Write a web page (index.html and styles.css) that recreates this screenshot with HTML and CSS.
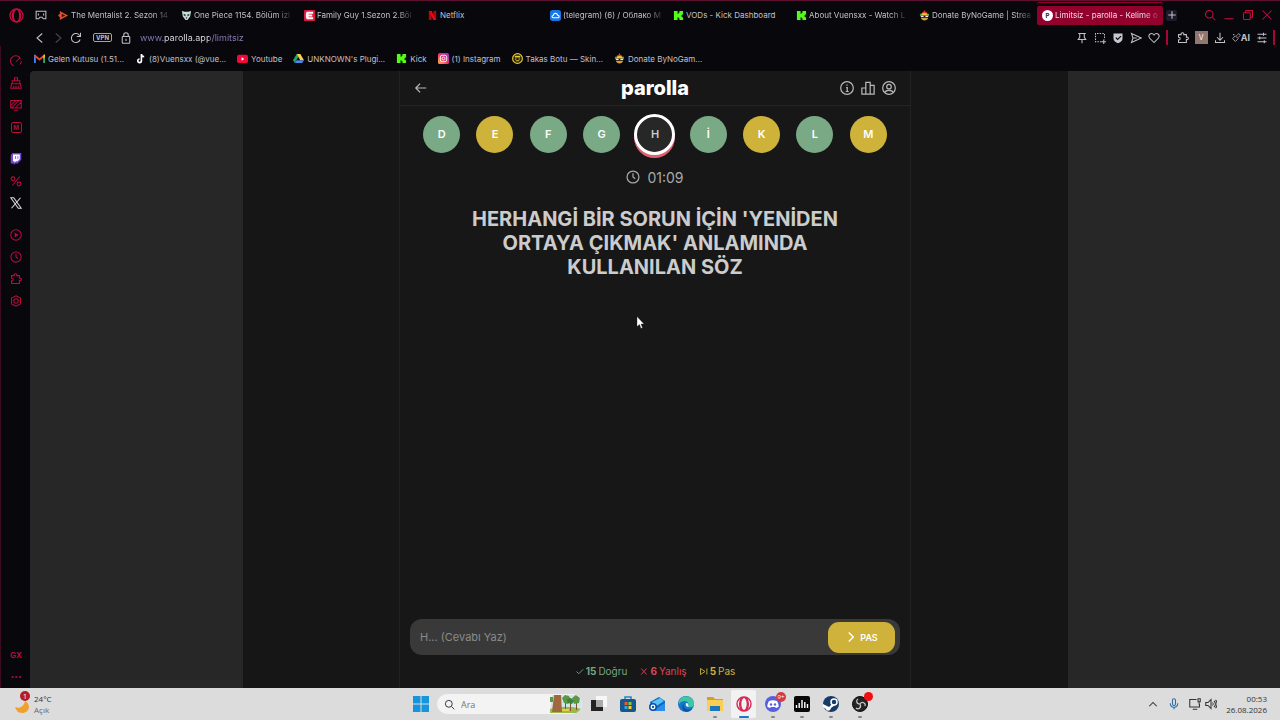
FILE: index.html
```html
<!DOCTYPE html>
<html lang="tr">

<head>
  <meta charset="UTF-8" />
  <title>Limitsiz - parolla - Kelime oyunu</title>
  <meta name="viewport" content="width=device-width, initial-scale=1.0" />
  <link rel="stylesheet" href="styles.css">
</head>

<body>
  <!-- shared icons -->
  <svg class="sprite" aria-hidden="true">
    <symbol id="opera" viewBox="0 0 16 16"><circle cx="8" cy="8" r="7" /><ellipse cx="8" cy="8" rx="3.4" ry="6.6" /><path d="M5.5 2.2C3 5 3 11 5.5 13.8M10.5 2.2c2.5 2.800 2.500 8.800 0 11.600" /></symbol>
    <symbol id="kick" viewBox="0 0 12 12"><path fill="#53fc18" d="M1 1h4v3h1V3h1V1h4v4h-1v1H9v1h1v1h1v3H7V9H6V8H5v3H1z" /></symbol>
    <symbol id="bynogame" viewBox="0 0 12 12"><path fill="#e23b2e" d="M6 0l1 2 2 1-1 2H4L3 3l2-1z" /><path fill="#f1c232" d="M1 7c0-5 10-5 10 0z" /><path fill="#151515" d="M1 6h10v2H1z" /><path fill="#eee" d="M2 6.300h3v1.400H2zM7 6.300h3v1.400H7z" /><path fill="#d3a03a" d="M2 8.500h8c-1 4-7 4-8 0z" /><path fill="#4ba34f" d="M1 4h2v2H1zM9 4h2v2H9z" /></symbol>
    <symbol id="puzzle" viewBox="0 0 16 16"><path d="M2 3.500h3.500c-1-3.500 4.500-3.500 3.500 0h3.500V7c3.500-1 3.500 4 0 3v4H2v-3.500c3 .5 3-4 0-3.500z" /></symbol>
    <symbol id="clock" viewBox="0 0 16 16"><circle cx="8" cy="8" r="6.800" /><path d="M8 3.800V8l2.500 2" /></symbol>
  </svg>

  <header class="chrome">
    <div class="tab-row">
      <button class="opera-menu" aria-label="Opera"><svg class="logo line"><use href="#opera" /></svg></button>
      <button class="workspace" aria-label="Çalışma alanı"><svg class="icon line" viewBox="0 0 16 16"><path d="M1.500 3h13v10H11L9.500 11h-3L5 13H1.500zM4.500 6v2.500M11.500 6v2.500" /></svg></button>
      <nav class="tabs">
        <a class="tab" href="#"><svg class="fav" viewBox="0 0 12 12"><path fill="#e2502a" d="M2 1l9 5-9 5V8L0 6l2-2z" /><path fill="#3b1510" d="M4 4l4 2-4 2z" /></svg><span class="fade">The Mentalist 2. Sezon 14</span></a>
        <a class="tab" href="#"><svg class="fav" viewBox="0 0 12 12"><path fill="#c9dcd6" d="M1 1l3 1h4l3-1-1 6-3 4H5L2 7z" /><path fill="#23443e" d="M3 4l2 1v2L3 6zM9 4L7 5v2l2-1zM5 8h2l-1 2z" /></svg><span class="fade">One Piece 1154. Bölüm izl</span></a>
        <a class="tab" href="#"><svg class="fav" viewBox="0 0 12 12"><rect width="12" height="12" rx="1" fill="#dc1740" /><path fill="#fff" d="M3 2h7v2H5v1h4v2H5v1h5v2H3L2 8V4z" /></svg><span class="fade">Family Guy 1.Sezon 2.Böl</span></a>
        <a class="tab" href="#"><svg class="fav" viewBox="0 0 12 12"><path fill="#b1060f" d="M2 1h3v10H2zM7 1h3v10H7z" /><path fill="#e50914" d="M2 1h3l5 10H7z" /></svg><span>Netflix</span></a>
        <a class="tab" href="#"><svg class="fav" viewBox="0 0 12 12"><rect width="12" height="12" rx="3" fill="#1877e8" /><path fill="none" stroke="#fff" stroke-width="1.200" d="M3.500 8.500c-2-.3-1.500-2.500 0-2.500.3-3 4.200-3 4.800-.3 2.200 0 2.200 2.800.2 2.800z" /></svg><span class="fade">(telegram) (6) / Облако M</span></a>
        <a class="tab" href="#"><svg class="fav"><use href="#kick" /></svg><span>VODs - Kick Dashboard</span></a>
        <a class="tab" href="#"><svg class="fav"><use href="#kick" /></svg><span class="fade">About Vuensxx - Watch L</span></a>
        <a class="tab" href="#"><svg class="fav"><use href="#bynogame" /></svg><span class="fade">Donate ByNoGame | Strea</span></a>
        <a class="tab active" href="#"><b class="fav letter">P</b><span class="fade">Limitsiz - parolla - Kelime o</span></a>
      </nav>
      <button class="new-tab" aria-label="Yeni sekme"><svg class="icon line" viewBox="0 0 16 16"><path d="M8 3v10M3 8h10" /></svg></button>
      <div class="window-buttons">
        <button aria-label="Ara"><svg class="icon line" viewBox="0 0 16 16"><circle cx="7" cy="7" r="5" /><path d="M11 11l4 4" /></svg></button>
        <button aria-label="Simge durumuna küçült"><svg class="icon line" viewBox="0 0 16 16"><path d="M2 13h12" /></svg></button>
        <button aria-label="Geri yükle"><svg class="icon line" viewBox="0 0 16 16"><rect x="2" y="5" width="9" height="9" rx="1" /><path d="M5 5V2h9v9h-3" /></svg></button>
        <button aria-label="Kapat"><svg class="icon line" viewBox="0 0 16 16"><path d="M2 2l12 12M14 2L2 14" /></svg></button>
      </div>
    </div>

    <div class="toolbar">
      <div class="nav-buttons">
        <button aria-label="Geri"><svg class="icon line" viewBox="0 0 16 16"><path d="M11 2L4 8l7 6" /></svg></button>
        <button class="off" aria-label="İleri" disabled><svg class="icon line" viewBox="0 0 16 16"><path d="M5 2l7 6-7 6" /></svg></button>
        <button aria-label="Yenile"><svg class="icon line" viewBox="0 0 16 16"><path d="M13.500 10A6 6 0 1 1 13 5M14 1v5H9" /></svg></button>
      </div>
      <button class="vpn">VPN</button>
      <button class="lock" aria-label="Site bilgisi"><svg class="icon line" viewBox="0 0 16 16"><rect x="3" y="6" width="10" height="9" rx="1" /><path d="M5 6V4c0-4 6-4 6 0v2M8 9v3" /></svg></button>
      <input class="address" type="text" value="www.parolla.app/limitsiz" aria-label="Adres" />
      <div class="tools">
        <button aria-label="Sabitle"><svg class="icon line" viewBox="0 0 16 16"><path d="M3 2h10M5 2v5l-2 3h10l-2-3V2M8 10v5" /></svg></button>
        <button aria-label="Ekran görüntüsü"><svg class="icon line" viewBox="0 0 16 16"><path stroke-dasharray="2 1.500" d="M10 13H2V2h12v8" /><path d="M13 10v6M10 13h6" /></svg></button>
        <button aria-label="Reklam engelleyici"><svg class="icon" viewBox="0 0 16 16"><path fill="#c9c6d2" d="M2 2h12v7c0 3-3 5-6 6-3-1-6-3-6-6z" /><path fill="none" stroke="#0a080d" stroke-width="1.600" d="M5 7.500L7.500 10 12 5.500" /></svg></button>
        <button aria-label="Akışım"><svg class="icon line" viewBox="0 0 16 16"><path d="M2 2l13 6-13 6 2-6zM4 8h5" /></svg></button>
        <button aria-label="Favori"><svg class="icon line" viewBox="0 0 16 16"><path d="M8 14L2 8C-1 3 5 0 8 4c3-4 9-1 6 4z" /></svg></button>
      </div>
      <div class="tools extensions">
        <button aria-label="Uzantılar"><svg class="icon line"><use href="#puzzle" /></svg></button>
        <button class="profile">V</button>
        <button aria-label="İndirilenler"><svg class="icon line" viewBox="0 0 16 16"><path d="M8 1v9M4 7l4 4 4-4M2 11v3h12v-3" /></svg></button>
        <button class="ai"><svg class="line" viewBox="0 0 16 16"><path d="M1 10l5-5 5 5-5 5zM8 5l4-4 3 3-4 4M2 3h2M3 2v2" /></svg>AI</button>
        <button aria-label="Ayarlar"><svg class="icon line" viewBox="0 0 16 16"><path d="M2 3h12M2 8h12M2 13h12M10 1v4M5 6v4M11 11v4" /></svg></button>
      </div>
    </div>
  </header>

  <div class="workarea">
    <aside class="sidebar">
      <button aria-label="Speed dial"><svg class="icon line" viewBox="0 0 16 16"><path d="M5 14.500A7 7 0 1 1 14 5M8 9l5-5M15 8c0 2-.5 3.500-1.500 4.500" /></svg></button>
      <button aria-label="GX Temizleyici"><svg class="icon line" viewBox="0 0 16 16"><path d="M6 5V1h4v4M3 9V5h10v4M2 9h12l1 6H1zM5 15v-3M8 15v-3M11 15v-3" /></svg></button>
      <button aria-label="Duvar kağıdı"><svg class="icon line" viewBox="0 0 16 16"><path d="M1 2h14v10H1zM5 15h6M2 8l6-6M2 12L12 2M7 12l8-8" /></svg></button>
      <button class="mod" aria-label="Mod"><b>M</b></button>
      <button class="group" aria-label="Twitch"><svg class="icon" viewBox="0 0 16 16"><path fill="#7446d8" d="M3 0h12v9l-5 5H7l-2 2v-2H1V3z" /><path fill="#fff" d="M4 2h9v6l-3 3H8l-2 2v-2H4z" /><path fill="#7446d8" d="M7 4h1v4H7zM10 4h1v4h-1z" /></svg></button>
      <button aria-label="Fırsatlar"><svg class="icon line" viewBox="0 0 16 16"><circle cx="4" cy="5" r="2.500" /><circle cx="12" cy="12" r="2.500" /><path d="M13 2L3 14" /></svg></button>
      <button class="x-app" aria-label="X"><svg class="icon line" viewBox="0 0 16 16"><path d="M1 1h4l10 14h-4zM14 1L2 15" /></svg></button>
      <button class="group" aria-label="Oynatıcı"><svg class="icon line" viewBox="0 0 16 16"><circle cx="8" cy="8" r="7" /><path fill="currentColor" d="M7 6l3 2-3 2z" /></svg></button>
      <button aria-label="Geçmiş"><svg class="icon line"><use href="#clock" /></svg></button>
      <button aria-label="Uzantılar"><svg class="icon line"><use href="#puzzle" /></svg></button>
      <button aria-label="Ayarlar"><svg class="icon line" viewBox="0 0 16 16"><path d="M8 1l6 3v8l-6 3-6-3V4z" /><circle cx="8" cy="8" r="3" /></svg></button>
      <button class="bottom">GX</button>
      <button aria-label="Diğer"><svg class="icon" viewBox="0 0 16 16"><path fill="currentColor" d="M2 7h3v2H2zM7 7h3v2H7zM12 7h3v2h-3z" /></svg></button>
    </aside>

    <div class="content">
      <nav class="bookmarks">
        <a href="#"><svg class="fav" viewBox="0 0 12 12"><path fill="#4285f4" d="M0 2h2v9H0z" /><path fill="#34a853" d="M10 2h2v9h-2z" /><path fill="none" stroke="#ea4335" stroke-width="2.200" d="M1 3l5 4 5-4" /><path fill="#fbbc04" d="M10 3l2-2v4l-2 1z" /></svg>Gelen Kutusu (1.51...</a>
        <a href="#"><svg class="fav" viewBox="0 0 12 12"><path fill="none" stroke="#fff" stroke-width="1.800" d="M7 1v7.500A2 2 0 1 1 5 6.500M7 1.500c.2 2 1.500 2.500 3 2.500" /></svg>(8)Vuensxx (@vue...</a>
        <a href="#"><svg class="fav" viewBox="0 0 12 12"><rect y="2" width="12" height="9" rx="2" fill="#f1093c" /><path fill="#fff" d="M5 4.500l3 2-3 2z" /></svg>Youtube</a>
        <a href="#"><svg class="fav" viewBox="0 0 12 12"><path fill="#1fa463" d="M4 1L0 8l2 3 4-7z" /><path fill="#ffcf48" d="M4 1h4l4 7H8z" /><path fill="#4688f4" d="M2 11l2-3h8l-2 3z" /></svg>UNKNOWN's Plugi...</a>
        <a href="#"><svg class="fav"><use href="#kick" /></svg>Kick</a>
        <a href="#"><svg class="fav" viewBox="0 0 12 12"><defs><linearGradient id="insta" x1="0" y1="1" x2="1" y2="0"><stop offset="0" stop-color="#ffb33c" /><stop offset=".5" stop-color="#ef2f70" /><stop offset="1" stop-color="#8b35e0" /></linearGradient></defs><rect width="12" height="12" rx="2" fill="url(#insta)" /><g fill="none" stroke="#fff"><rect x="2.500" y="2.500" width="7" height="7" rx="2" /><circle cx="6" cy="6" r="1.600" /></g></svg>(1) Instagram</a>
        <a href="#"><svg class="fav" viewBox="0 0 12 12"><circle cx="6" cy="6" r="5.300" fill="#17150c" stroke="#eacb35" stroke-width="1.300" /><path fill="#eacb35" d="M3 3h6v2H3zM3 6h2v1H3zM7 6h2v1H7zM4 8h4v1H4z" /></svg>Takas Botu — Skin...</a>
        <a href="#"><svg class="fav"><use href="#bynogame" /></svg>Donate ByNoGam...</a>
      </nav>

      <div class="page">
        <main class="stage">
          <section class="game">
            <div class="game-header">
              <button aria-label="Geri"><svg class="game-icon line" viewBox="0 0 16 16"><path d="M14 8H2M7 3L2 8l5 5" /></svg></button>
              <h1>parolla</h1>
              <div class="game-actions">
                <button aria-label="Bilgi"><svg class="game-icon line" viewBox="0 0 16 16"><circle cx="8" cy="8" r="7.200" /><path d="M7 7.500h1.300V12M6.500 12h3.500M8 4v1.500" /></svg></button>
                <button aria-label="İstatistik"><svg class="game-icon line" viewBox="0 0 16 16"><path d="M1 15V8h4.500v7zM5.500 15V1.500h5V15zM10.500 15V5H15v10z" /></svg></button>
                <button aria-label="Profil"><svg class="game-icon line" viewBox="0 0 16 16"><circle cx="8" cy="8" r="7.200" /><circle cx="8" cy="6.500" r="2.600" /><path d="M3.500 13c1-3 8-3 9 0" /></svg></button>
              </div>
            </div>

            <ol class="letters">
              <li class="correct">D</li>
              <li class="passed">E</li>
              <li class="correct">F</li>
              <li class="correct">G</li>
              <li class="current">H</li>
              <li class="correct">İ</li>
              <li class="passed">K</li>
              <li class="correct">L</li>
              <li class="passed">M</li>
            </ol>

            <div class="timer"><svg class="game-icon line"><use href="#clock" /></svg><time>01:09</time></div>

            <h2 class="question">HERHANGİ BİR SORUN İÇİN 'YENİDEN ORTAYA ÇIKMAK' ANLAMINDA KULLANILAN SÖZ</h2>

            <form class="answer">
              <input type="text" placeholder="H... (Cevabı Yaz)" aria-label="Cevap" />
              <button type="button" class="pass"><svg class="icon line" viewBox="0 0 16 16"><path d="M5 2l6 6-6 6" /></svg>PAS</button>
            </form>

            <div class="score">
              <span class="score-correct"><svg class="score-icon line" viewBox="0 0 12 12"><path d="M2 6l3 3 6-6" /></svg><b>15</b> Doğru</span>
              <span class="score-wrong"><svg class="score-icon line" viewBox="0 0 12 12"><path d="M3 2l7 8M10 2l-7 8" /></svg><b>6</b> Yanlış</span>
              <span class="score-pass"><svg class="score-icon line" viewBox="0 0 12 12"><path d="M2 2l6 4-6 4zM10.500 2v8" /></svg><b>5</b> Pas</span>
            </div>
          </section>
        </main>
      </div>
    </div>
  </div>

  <footer class="taskbar">
    <button class="weather">
      <span class="weather-icon">
        <svg viewBox="0 0 16 16"><path fill="#f0a12d" d="M1 9c4 2 9 0 10-6 7 4 4 12-3 12-4 0-6-3-7-6z" /></svg>
        <span class="badge">1</span>
      </span>
      <span class="weather-text">24°C<small>Açık</small></span>
    </button>

    <div class="apps">
      <button class="app" aria-label="Başlat"><svg viewBox="0 0 16 16"><path fill="#1595dc" d="M0 0h7.500v7.500H0zM8.500 0H16v7.500H8.500zM0 8.500h7.500V16H0zM8.500 8.500H16V16H8.500z" /></svg></button>
      <label class="search">
        <svg class="line" viewBox="0 0 16 16"><circle cx="7" cy="7" r="5" /><path d="M11 11l4 4" /></svg>
        <input type="text" placeholder="Ara" />
        <svg class="forest" viewBox="0 0 32 18"><path fill="#cfe6e8" d="M2 0h26c5 3 5 15 0 18H0z" /><path fill="#9bb84a" d="M0 14c8-3 24-3 31 0l-3 4H0z" /><path fill="#a3673f" d="M4 0h7l1 17H2z" /><path fill="#7d5434" d="M15 5h1v10h-1zM20 6h1v10h-1zM26 6h1v9h-1z" /><path fill="#5b9846" d="M12 3l3-3 4 1 2 4-3 4-4-1zM22 3l4-3 4 3-1 5-5 1zM0 2h3v5H0z" /><path fill="#417f3c" d="M17 4l4-1 3 3-2 3-4-1z" /><path fill="#efc84a" d="M12 14h7v2h-7z" /></svg>
      </label>
      <button class="app" aria-label="Görev görünümü"><svg viewBox="0 0 16 16"><path fill="#f7f7f7" d="M5 0h11v11H5z" /><path fill="#222" d="M0 4h12v11H0z" /><path fill="#aaa" d="M5 4h7v7H5z" /></svg></button>
      <button class="app" aria-label="Mağaza"><svg viewBox="0 0 16 16"><path fill="none" stroke="#2386c4" stroke-width="1.500" d="M5 4V1h6v3" /><rect y="3" width="16" height="13" rx="2" fill="#17578d" /><path fill="#f05a28" d="M4.500 6h3v3h-3z" /><path fill="#8cc63e" d="M8.500 6h3v3h-3z" /><path fill="#29abe2" d="M4.500 10h3v3h-3z" /><path fill="#fdc72f" d="M8.500 10h3v3h-3z" /></svg></button>
      <button class="app" aria-label="Outlook"><svg viewBox="0 0 16 16"><path fill="#1265c5" d="M1 6l9-5 6 4v10H3z" /><path fill="#58c3f5" d="M3 6l8-4 4 3-9 6z" /><path fill="#2b8de8" d="M5 14l11-7v8H5z" /><circle cx="4" cy="11" r="4" fill="#0c4fa8" /><circle cx="4" cy="11" r="1.800" fill="none" stroke="#fff" stroke-width="1.300" /></svg></button>
      <button class="app" aria-label="Edge"><svg viewBox="0 0 16 16"><circle cx="8" cy="8" r="8" fill="#1677c9" /><path fill="#3ec6a5" d="M1 5c4-8 15-5 15 3 0 4-6 4-6 2 2-5-5-7-9-2z" /><path fill="#0c4f9c" d="M6 7c-2 5 3 8 8 6-5 6-13 1-8-6z" /><path fill="#e7f7fb" d="M8 7c4 0 1 3 3 4-2 0-4-1-3-4z" /></svg></button>
      <button class="app running" aria-label="Dosya Gezgini"><svg viewBox="0 0 16 16"><path fill="#d89d22" d="M0 1h6l2 2h8v5H0z" /><path fill="#f8cf54" d="M0 4h16v11H0z" /><path fill="#1d75bd" d="M3 10h10v5H3z" /></svg></button>
      <button class="app running selected" aria-label="Opera GX"><svg class="line"><use href="#opera" /></svg></button>
      <button class="app running" aria-label="Discord"><svg viewBox="0 0 16 16"><circle cx="8" cy="8" r="8" fill="#5560dc" /><path fill="#fff" d="M4 5c3-1 5-1 8 0 1 2 2 4 1.500 6L11 12l-1-1H6l-1 1-2.500-1C2 9 3 7 4 5z" /><circle cx="6" cy="8.500" r="1.200" fill="#5560dc" /><circle cx="10" cy="8.500" r="1.200" fill="#5560dc" /></svg><span class="badge">9+</span></button>
      <button class="app running" aria-label="Ses"><svg viewBox="0 0 16 16"><rect width="16" height="16" rx="2" fill="#080808" /><path stroke="#fff" stroke-width="1.400" d="M2.500 9v3M5.200 7v5M8 4v8M10.800 6v6M13.500 8v4" /></svg></button>
      <button class="app running" aria-label="Steam"><svg viewBox="0 0 16 16"><circle cx="8" cy="8" r="8" fill="#153b66" /><path fill="#fff" d="M0 8l6 3 3-3 3 1-4 3c-1 4-5 3-5 1L0 11z" /><circle cx="11" cy="6" r="3" fill="#153b66" stroke="#fff" stroke-width="1.500" /></svg></button>
      <button class="app running" aria-label="OBS"><svg viewBox="0 0 16 16"><circle cx="8" cy="8" r="7.500" fill="#242424" stroke="#111" /><path fill="none" stroke="#ccc" stroke-width="1.200" d="M8 8C4 8 4 4 6 3M8 8c2-3 6-1 5 2M8 8c2 4-2 6-4 4" /></svg><span class="badge dot"></span></button>
    </div>

    <div class="tray">
      <button aria-label="Gizli simgeler"><svg class="line" viewBox="0 0 16 16"><path d="M3 11l5-5 5 5" /></svg></button>
      <button class="mic" aria-label="Mikrofon"><svg class="line" viewBox="0 0 16 16"><rect x="6" y="1" width="4" height="9" rx="2" /><path d="M3 7c0 7 10 7 10 0M8 12v3" /></svg></button>
      <button class="system" aria-label="Ağ ve ses">
        <svg class="line" viewBox="0 0 16 16"><path d="M10 2H1v10h13V8M5 15h6M12 1h3v4h-3zM13.500 5v4" /></svg>
        <svg class="line" viewBox="0 0 16 16"><path d="M1 6h3l4-4v12l-4-4H1zM10 6c1 1 1 3 0 4M12 4c2.500 2 2.500 6 0 8M14 2.500c3 3 3 8 0 11" /></svg>
      </button>
      <button class="date">00:53<br>26.08.2026</button>
    </div>
  </footer>

  <svg class="cursor" viewBox="0 0 8 13" aria-hidden="true"><path fill="#fff" stroke="#111" stroke-width=".3" d="M.5.5v10L3 8.500l1.500 4 1.500-.7L4.500 8h3z" /></svg>
</body>

</html>
```

FILE: styles.css
```css
* {
  box-sizing: border-box;
}

body {
  margin: 0;
  height: 100vh;
  display: flex;
  flex-direction: column;
  overflow: hidden;
  background: #08070b;
  color: #c3c0ca;
  font-family: Inter, sans-serif;
  font-size: 8px;
}

button,
input {
  margin: 0;
  padding: 0;
  border: none;
  outline: none;
  background: none;
  color: inherit;
  font: inherit;
}

button {
  display: flex;
  align-items: center;
  justify-content: center;
  cursor: pointer;
}

a {
  color: inherit;
  text-decoration: none;
}

svg {
  display: block;
  flex: none;
}

.sprite {
  position: absolute;
  width: 0;
  height: 0;
}

.line {
  fill: none;
  stroke: currentColor;
  stroke-width: 1.4;
}

.icon {
  width: 12px;
  height: 12px;
}

.fav {
  width: 11px;
  height: 11px;
}

/* Tabs */
.chrome {
  border-top: 1px solid #5c1230;
}

.tab-row {
  display: flex;
  align-items: center;
  height: 28px;
}

.opera-menu {
  width: 32px;
  color: #c5103f;
}

.logo {
  width: 15px;
  height: 15px;
}

.workspace {
  width: 18px;
}

.tabs {
  flex: 1;
  display: flex;
  min-width: 0;
  margin-left: 3px;
}

.tab {
  flex: 1;
  display: flex;
  align-items: center;
  gap: 2px;
  min-width: 0;
  height: 19px;
  padding: 0 5px;
  white-space: nowrap;
}

.fade {
  mask-image: linear-gradient(to right, #000 85%, rgba(0, 0, 0, 0.2));
}

.tab.active {
  flex: 0 0 126px;
  background: #92002e;
  color: #eadde3;
  border-radius: 2px;
  box-shadow: 0 -3px #08070b, 0 -4px #92002e;
}

.letter {
  flex: none;
  border-radius: 50%;
  background: #fff;
  color: #222;
  font-size: 6px;
  line-height: 11px;
  text-align: center;
}

.new-tab {
  width: 11px;
  height: 11px;
  margin-left: 3px;
  border-radius: 2px;
  background: #1d1a29;
}

.window-buttons {
  display: flex;
  gap: 7px;
  padding: 0 7px 0 27px;
  color: #c5103f;
}

/* Address bar */
.toolbar {
  display: flex;
  align-items: center;
  height: 17px;
  padding: 0 5px 0 34px;
}

.nav-buttons {
  display: flex;
  gap: 6px;
}

.off {
  color: #4a4750;
}

.vpn {
  width: 19px;
  height: 9px;
  margin-left: 11px;
  border: 1px solid #a4a1aa;
  border-radius: 2px;
  font-size: 6px;
  font-weight: 700;
}

.lock {
  margin-left: 8px;
}

/* host is brighter than the rest of the address */
.address {
  flex: 1;
  min-width: 0;
  margin-left: 8px;
  font-size: 9px;
  color: transparent;
  background: linear-gradient(to right, #8a7cb5 23px, #e4e1ea 23px, #e4e1ea 69px, #8a7cb5 69px);
  background-clip: text;
}

.tools {
  display: flex;
  align-items: center;
  gap: 6px;
  padding-right: 6px;
}

.extensions {
  height: 15px;
  padding: 0 5px 0 9px;
  border-left: 2px solid #a90638;
  border-right: 2px solid #a90638;
}

.profile {
  width: 13px;
  height: 13px;
  background: #93766e;
  color: #fff;
  font-size: 7px;
}

.ai {
  font-size: 9px;
  font-weight: 700;
}

.ai svg {
  width: 9px;
  height: 9px;
}

/* Sidebar */
.workarea {
  flex: 1;
  display: flex;
  min-height: 0;
}

.sidebar {
  width: 30px;
  display: flex;
  flex-direction: column;
  padding: 4px 0 0 1px;
  border-left: 1px solid #3b0c20;
  color: #b90d3d;
}

.sidebar button {
  height: 22px;
}

.sidebar .group {
  margin-top: 10px;
}

.sidebar .bottom {
  margin-top: auto;
  font-weight: 700;
}

.sidebar .x-app {
  color: #ddd;
}

.mod b {
  width: 11px;
  height: 11px;
  border: 1px solid;
  border-radius: 2px;
  font-size: 6px;
  line-height: 9px;
}

.content {
  flex: 1;
  display: flex;
  flex-direction: column;
  min-width: 0;
}

.bookmarks {
  display: flex;
  align-items: center;
  gap: 11px;
  height: 25px;
  padding-left: 4px;
  white-space: nowrap;
}

.bookmarks a {
  display: flex;
  align-items: center;
  gap: 3px;
}

/* Web page */
.page {
  flex: 1;
  display: flex;
  justify-content: center;
  min-height: 0;
  background: #272727;
  border-top-left-radius: 4px;
}

.stage {
  width: 66%;
  display: flex;
  justify-content: center;
  background: #161616;
}

.game {
  width: 100%;
  max-width: 512px;
  display: flex;
  flex-direction: column;
  background: #171717;
  border-left: 1px solid #222;
  border-right: 1px solid #222;
  color: #ccc;
}

.game-icon {
  width: 14px;
  height: 14px;
}

.game-header {
  display: grid;
  grid-template-columns: 1fr auto 1fr;
  align-items: center;
  height: 35px;
  padding: 0 14px;
  border-bottom: 1px solid #242424;
  color: #b8b8b8;
}

.game-header button {
  justify-self: start;
}

.game-header h1 {
  margin: 0;
  color: #fff;
  font-size: 20px;
  font-weight: 800;
  line-height: 24px;
}

.game-actions {
  display: flex;
  justify-content: flex-end;
  gap: 7px;
}

.letters {
  display: grid;
  grid-template-columns: repeat(9, 1fr);
  place-items: center;
  height: 42px;
  margin: 7px 15px 0;
  padding: 0;
  list-style: none;
}

.letters li {
  display: flex;
  align-items: center;
  justify-content: center;
  width: 37px;
  height: 37px;
  border-radius: 50%;
  color: #fff;
  font-size: 11px;
  font-weight: 600;
}

.letters .correct {
  background: #7aa985;
}

.letters .passed {
  background: #ceb23a;
}

.letters .current {
  width: 41px;
  height: 41px;
  background: #272727;
  border: 3px solid #fff;
  box-shadow: 0 3px #e0606f;
  color: #ccc;
}

.timer {
  display: flex;
  align-items: center;
  justify-content: center;
  gap: 7px;
  height: 20px;
  margin-top: 12px;
  color: #aaa;
  font-size: 14px;
}

.question {
  flex: 1;
  margin: 20px 60px 0;
  text-align: center;
  font-size: 20px;
  font-weight: 700;
  line-height: 24px;
}

.answer {
  display: flex;
  align-items: center;
  height: 36px;
  margin: 0 10px;
  padding: 0 5px 0 10px;
  border-radius: 12px;
  background: #393939;
}

.answer input {
  flex: 1;
  min-width: 0;
  font-size: 11px;
}

.answer input::placeholder {
  color: #8a8a8a;
  opacity: 1;
}

.pass {
  gap: 3px;
  width: 67px;
  height: 31px;
  border-radius: 11px;
  background: #ceb23a;
  color: #fff;
  font-size: 9px;
  font-weight: 600;
}

.pass .icon {
  stroke-width: 2;
}

.score {
  display: flex;
  justify-content: center;
  gap: 12px;
  height: 33px;
  line-height: 33px;
  font-size: 10px;
}

.score span {
  display: flex;
  align-items: center;
  gap: 2px;
}

.score-icon {
  width: 9px;
  height: 9px;
  stroke-width: 1.2;
}

.score-correct {
  color: #76a781;
}

.score-wrong {
  color: #d84858;
}

.score-pass {
  color: #ceb23a;
}

/* Taskbar */
.taskbar {
  display: grid;
  grid-template-columns: 1fr auto 1fr;
  align-items: center;
  height: 32px;
  background: #dcdcdc;
  color: #333;
  font-family: "Open Sans", sans-serif;
  font-size: 8px;
}

.weather {
  justify-self: start;
  gap: 2px;
  padding-left: 12px;
  text-align: left;
}

.weather-icon {
  position: relative;
  padding: 4px 2px 0;
}

.weather-icon svg {
  width: 16px;
  height: 16px;
}

.weather-text small {
  display: block;
  color: #666;
  font-size: 8px;
}

.badge {
  position: absolute;
  top: -3px;
  right: -1px;
  display: flex;
  align-items: center;
  justify-content: center;
  width: 10px;
  height: 10px;
  border-radius: 50%;
  background: #d23b45;
  color: #fff;
  font-size: 6px;
}

.weather .badge {
  right: auto;
  left: 8px;
  background: #b51e23;
  font-size: 7px;
}

.apps {
  display: flex;
  align-items: center;
  gap: 4px;
}

.app {
  position: relative;
  width: 25px;
  height: 28px;
}

.app svg {
  width: 16px;
  height: 16px;
}

.app .badge {
  top: 2px;
}

.badge.dot {
  width: 9px;
  height: 9px;
  background: #f20d14;
}

.running::after {
  content: "";
  position: absolute;
  bottom: 0;
  width: 4px;
  height: 2px;
  border-radius: 1px;
  background: #888;
}

.selected {
  background: #f2f2f2;
  border-radius: 2px;
  color: #d42752;
}

.selected::after {
  width: 10px;
  background: #1879cb;
}

.search {
  display: flex;
  align-items: center;
  gap: 6px;
  width: 145px;
  height: 20px;
  padding-left: 7px;
  border-radius: 10px;
  background: #f3f3f3;
  overflow: hidden;
}

.search svg {
  width: 11px;
  height: 11px;
}

.search input {
  flex: 1;
  min-width: 0;
  font-size: 9px;
}

.search .forest {
  width: 32px;
  height: 18px;
}

.tray {
  display: flex;
  align-items: center;
  justify-content: flex-end;
  padding-right: 13px;
}

.tray svg {
  width: 12px;
  height: 12px;
}

.tray button {
  margin-left: 9px;
}

.tray .mic {
  color: #2b6cab;
}

.tray .system {
  gap: 4px;
}

.tray .date {
  display: block;
  text-align: right;
  line-height: 11px;
}

.cursor {
  position: absolute;
  top: 316px;
  left: 636px;
  width: 9px;
  height: 13px;
}
```
